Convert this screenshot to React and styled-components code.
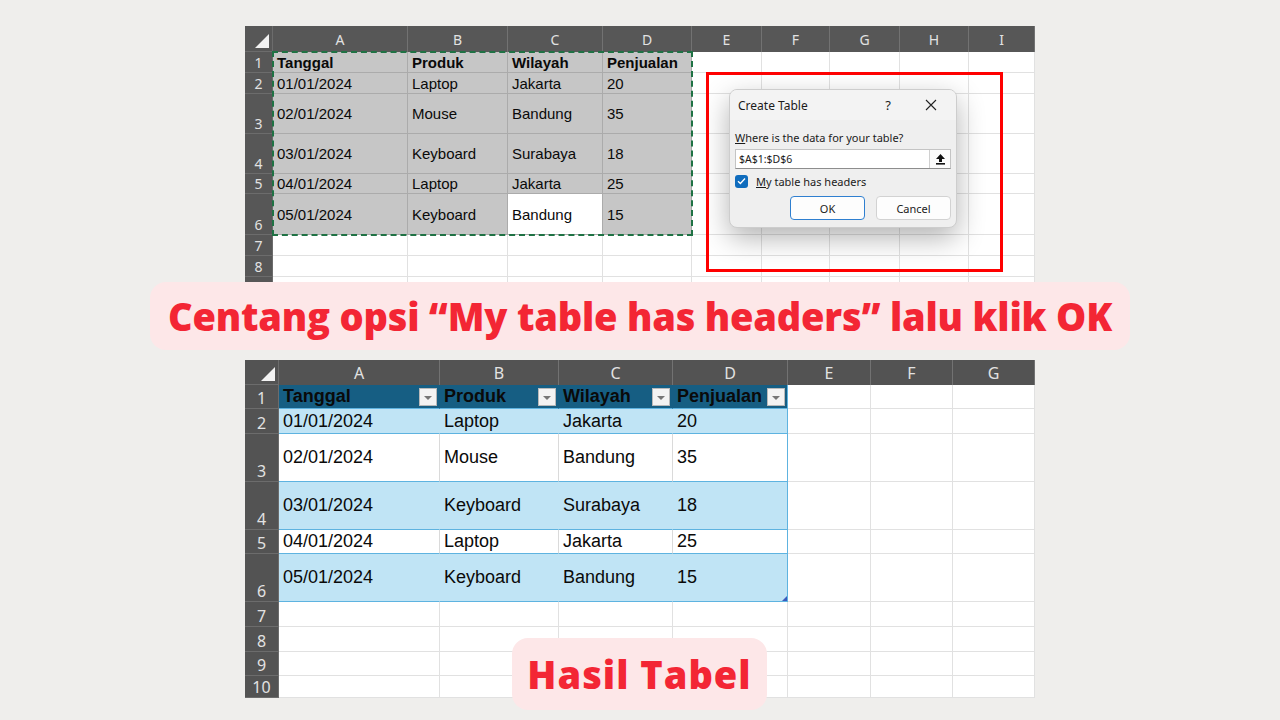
import React from "react";
import styled, { createGlobalStyle } from "styled-components";

const GlobalStyle = createGlobalStyle`
  html, body {
    margin: 0;
    padding: 0;
    background: #efeeec;
  }
  body {
    font-family: "Liberation Sans", Arial, sans-serif;
  }
`;

const Page = styled.div`
  width: 1280px;
  height: 720px;
  overflow: hidden;
  display: flex;
  flex-direction: column;
  align-items: center;
  padding-top: 26px;
  box-sizing: border-box;
`;

const SheetWrap = styled.div`
  position: relative;
  width: 790px;
  flex-shrink: 0;
  margin-top: ${(p) => p.$top || 0}px;
`;

const Grid = styled.div`
  display: grid;
  grid-template-columns: ${(p) => p.$cols.map((c) => c + "px").join(" ")};
  grid-template-rows: ${(p) => p.$rows.map((r) => r + "px").join(" ")};
  height: ${(p) => p.$h}px;
  overflow: hidden;
  background: #fff;
`;

const Corner = styled.div`
  background: ${(p) => p.$bg};
  border-right: 1px solid #6c6c6c;
  border-bottom: 1px solid #6c6c6c;
  box-sizing: border-box;
  display: flex;
  align-items: flex-end;
  justify-content: flex-end;
  padding: 0 3px 3px 0;
`;

const ColHead = styled.div`
  background: ${(p) => p.$bg};
  color: #e2e2e2;
  font-family: "Noto Sans", sans-serif;
  font-size: ${(p) => p.$fs}px;
  display: flex;
  align-items: center;
  justify-content: center;
  border-right: 1px solid #727272;
  box-sizing: border-box;
`;

const RowHead = styled.div`
  background: ${(p) => p.$bg};
  color: #e2e2e2;
  font-family: "Noto Sans", sans-serif;
  font-size: ${(p) => p.$fs}px;
  line-height: 1;
  display: flex;
  align-items: flex-end;
  justify-content: center;
  padding-bottom: 2px;
  border-bottom: 1px solid #6c6c6c;
  border-right: 1px solid #6c6c6c;
  box-sizing: border-box;
`;

const Cell = styled.div`
  position: relative;
  display: flex;
  align-items: center;
  padding-left: 4px;
  background: ${(p) => p.$bg || "#fff"};
  color: #0a0a0a;
  font-size: ${(p) => p.$fs}px;
  font-weight: ${(p) => (p.$bold ? 700 : 400)};
  border-right: 1px solid ${(p) => p.$v || "#e1e1e1"};
  border-bottom: 1px solid ${(p) => p.$h || "#e1e1e1"};
  box-sizing: border-box;
  white-space: nowrap;
  overflow: visible;
`;

const FilterBtn = styled.span`
  position: absolute;
  right: 2px;
  top: 3px;
  width: 18px;
  height: 18px;
  background: #f3f3f3;
  border: 1px solid #b9b9b9;
  box-sizing: border-box;
  display: flex;
  align-items: center;
  justify-content: center;

  &::after {
    content: "";
    border-left: 4px solid transparent;
    border-right: 4px solid transparent;
    border-top: 4px solid #767676;
    margin-top: 1px;
  }
`;

const ResizeHandle = styled.span`
  position: absolute;
  right: 0;
  bottom: 0;
  width: 0;
  height: 0;
  border-left: 5px solid transparent;
  border-bottom: 5px solid #3b5bbd;
`;

const Marquee = styled.div`
  position: absolute;
  left: 27px;
  top: 25px;
  width: 421px;
  height: 185px;
  border: 2px dashed #1f7244;
  box-sizing: border-box;
  pointer-events: none;
`;

const RedFrame = styled.div`
  position: absolute;
  left: 461px;
  top: 46px;
  width: 297px;
  height: 200px;
  border: 3px solid #ff0000;
  box-sizing: border-box;
`;

const Dialog = styled.div`
  position: absolute;
  left: 484px;
  top: 63px;
  width: 228px;
  height: 139px;
  background: #efefef;
  border: 1px solid #cdcdcd;
  border-radius: 8px;
  box-shadow: 0 10px 28px rgba(0, 0, 0, 0.3);
  box-sizing: border-box;
  overflow: hidden;
  font-family: "Noto Sans", sans-serif;
  color: #1b1b1b;
`;

const TitleBar = styled.div`
  height: 30px;
  background: #f3f3f3;
  display: flex;
  align-items: center;
  padding: 0 0 0 8px;
  font-size: 12px;
`;

const TitleText = styled.span`
  flex: 1;
`;

const HelpMark = styled.span`
  width: 20px;
  text-align: center;
  font-size: 13px;
  margin-right: 23px;
`;

const CloseBtn = styled.span`
  width: 20px;
  display: flex;
  justify-content: center;
  margin-right: 15px;
`;

const Body = styled.div`
  padding: 10px 5px 0 5px;
  font-size: 11px;
`;

const Label = styled.div`
  line-height: 16px;
`;

const Key = styled.span`
  text-decoration: underline;
`;

const RangeInput = styled.div`
  margin-top: 3px;
  height: 20px;
  background: #fff;
  border: 1px solid #c4c4c4;
  border-bottom-color: #8d8d8d;
  box-sizing: border-box;
  display: flex;
  align-items: center;
`;

const RangeText = styled.span`
  flex: 1;
  padding-left: 3px;
  font-size: 10.5px;
`;

const RangeBtn = styled.span`
  width: 20px;
  height: 18px;
  border-left: 1px solid #d0d0d0;
  display: flex;
  align-items: center;
  justify-content: center;
  background: #fbfbfb;
`;

const CheckRow = styled.div`
  margin-top: 5px;
  display: flex;
  align-items: center;
  gap: 8px;
  height: 14px;
`;

const CheckBox = styled.span`
  width: 13px;
  height: 13px;
  border-radius: 3px;
  background: #0f6cbd;
  display: flex;
  align-items: center;
  justify-content: center;
`;

const Buttons = styled.div`
  margin-top: 8px;
  display: flex;
  justify-content: flex-end;
  gap: 11px;
`;

const DlgButton = styled.span`
  width: 75px;
  height: 24px;
  box-sizing: border-box;
  border-radius: 4px;
  background: #fdfdfd;
  border: 1px solid ${(p) => (p.$primary ? "#2f7fd0" : "#d2d2d2")};
  display: flex;
  align-items: center;
  justify-content: center;
  font-size: 11px;
`;

const Caption = styled.div`
  flex-shrink: 0;
  width: 980px;
  height: 68px;
  border-radius: 16px;
  background: #fde7e8;
  display: flex;
  align-items: center;
  justify-content: center;
  color: #f32634;
  font-family: "Open Sans", sans-serif;
  font-weight: 800;
  font-size: 38px;
  letter-spacing: -0.2px;
`;

const ResultPill = styled(Caption)`
  position: absolute;
  left: 267px;
  top: 278px;
  width: 255px;
  height: 72px;
  letter-spacing: 1px;
`;

const topCols = [28, 135, 100, 95, 89, 70, 68, 70, 69, 66];
const topRows = [26, 21, 21, 40, 40, 20, 41, 21, 21, 21];
const topLetters = ["A", "B", "C", "D", "E", "F", "G", "H", "I"];

const botCols = [34, 161, 119, 114, 115, 83, 82, 82];
const botRows = [25, 24, 25, 48, 48, 24, 48, 25, 25, 24, 22];
const botLetters = ["A", "B", "C", "D", "E", "F", "G"];

const data = [
  ["Tanggal", "Produk", "Wilayah", "Penjualan"],
  ["01/01/2024", "Laptop", "Jakarta", "20"],
  ["02/01/2024", "Mouse", "Bandung", "35"],
  ["03/01/2024", "Keyboard", "Surabaya", "18"],
  ["04/01/2024", "Laptop", "Jakarta", "25"],
  ["05/01/2024", "Keyboard", "Bandung", "15"],
];

const CornerMark = () => (
  <svg width="14" height="14" viewBox="0 0 14 14">
    <polygon points="14,0 14,14 0,14" fill="#f2f2f2" />
  </svg>
);

const topCell = (r, c) => {
  const inSel = r <= 6 && c < 4;
  const active = r === 6 && c === 2;
  const text = r <= 6 && c < 4 ? data[r - 1][c] : "";
  return (
    <Cell
      key={`t${r}-${c}`}
      $fs={15}
      $bold={r === 1}
      $bg={inSel && !active ? "#c6c6c6" : "#fff"}
      $v={inSel ? "#ababab" : "#e1e1e1"}
      $h={inSel ? "#ababab" : "#e1e1e1"}
    >
      {text}
    </Cell>
  );
};

const botCell = (r, c) => {
  const inTable = r <= 6 && c < 4;
  const text = inTable ? data[r - 1][c] : "";
  let bg = "#fff";
  let v = "#e1e1e1";
  let h = "#e1e1e1";
  if (inTable) {
    h = "#5eb3e0";
    if (r === 1) {
      bg = "#165e83";
      v = c === 3 ? "#5eb3e0" : "#165e83";
    } else if (r % 2 === 0) {
      bg = "#c0e4f5";
      v = c === 3 ? "#5eb3e0" : "#c0e4f5";
    } else {
      v = c === 3 ? "#5eb3e0" : "#dadada";
    }
  }
  return (
    <Cell key={`b${r}-${c}`} $fs={18} $bold={r === 1} $bg={bg} $v={v} $h={h}>
      {text}
      {r === 1 && inTable && <FilterBtn />}
      {r === 6 && c === 3 && <ResizeHandle />}
    </Cell>
  );
};

// visibleRows: rows whose number fits in the cropped sheet
const Sheet = ({ cols, rows, letters, height, head, fs, cell, visibleRows }) => (
  <Grid $cols={cols} $rows={rows} $h={height}>
    <Corner $bg={head}>
      <CornerMark />
    </Corner>
    {letters.map((l) => (
      <ColHead key={l} $bg={head} $fs={fs}>
        {l}
      </ColHead>
    ))}
    {rows.slice(1).map((_, i) => (
      <React.Fragment key={i}>
        <RowHead $bg={head} $fs={fs}>
          {i + 1 <= visibleRows ? i + 1 : ""}
        </RowHead>
        {letters.map((_, c) => cell(i + 1, c))}
      </React.Fragment>
    ))}
  </Grid>
);

const UploadIcon = () => (
  <svg width="11" height="12" viewBox="0 0 11 12">
    <path d="M5.5 1 L10 6 L7 6 L7 9 L4 9 L4 6 L1 6 Z" fill="#111" />
    <rect x="1" y="10" width="9" height="1.6" fill="#111" />
  </svg>
);

const CloseIcon = () => (
  <svg width="12" height="12" viewBox="0 0 12 12">
    <path d="M1 1 L11 11 M11 1 L1 11" stroke="#222" strokeWidth="1.1" />
  </svg>
);

const CheckIcon = () => (
  <svg width="9" height="8" viewBox="0 0 9 8">
    <path d="M1 4.2 L3.4 6.5 L8 1.5" stroke="#fff" strokeWidth="1.3" fill="none" />
  </svg>
);

const CreateTableDialog = () => (
  <Dialog>
    <TitleBar>
      <TitleText>Create Table</TitleText>
      <HelpMark>?</HelpMark>
      <CloseBtn>
        <CloseIcon />
      </CloseBtn>
    </TitleBar>
    <Body>
      <Label>
        <Key>W</Key>here is the data for your table?
      </Label>
      <RangeInput>
        <RangeText>$A$1:$D$6</RangeText>
        <RangeBtn>
          <UploadIcon />
        </RangeBtn>
      </RangeInput>
      <CheckRow>
        <CheckBox>
          <CheckIcon />
        </CheckBox>
        <span>
          <Key>M</Key>y table has headers
        </span>
      </CheckRow>
      <Buttons>
        <DlgButton $primary>OK</DlgButton>
        <DlgButton>Cancel</DlgButton>
      </Buttons>
    </Body>
  </Dialog>
);

const App = () => (
  <Page>
    <GlobalStyle />
    <SheetWrap>
      <Sheet
        cols={topCols}
        rows={topRows}
        letters={topLetters}
        height={256}
        head="#575757"
        fs={14}
        cell={topCell}
        visibleRows={8}
      />
      <Marquee />
      <RedFrame />
      <CreateTableDialog />
    </SheetWrap>
    <Caption>Centang opsi “My table has headers” lalu klik OK</Caption>
    <SheetWrap $top={10}>
      <Sheet
        cols={botCols}
        rows={botRows}
        letters={botLetters}
        height={338}
        head="#535353"
        fs={16}
        cell={botCell}
        visibleRows={10}
      />
      <ResultPill>Hasil Tabel</ResultPill>
    </SheetWrap>
  </Page>
);

export default App;
